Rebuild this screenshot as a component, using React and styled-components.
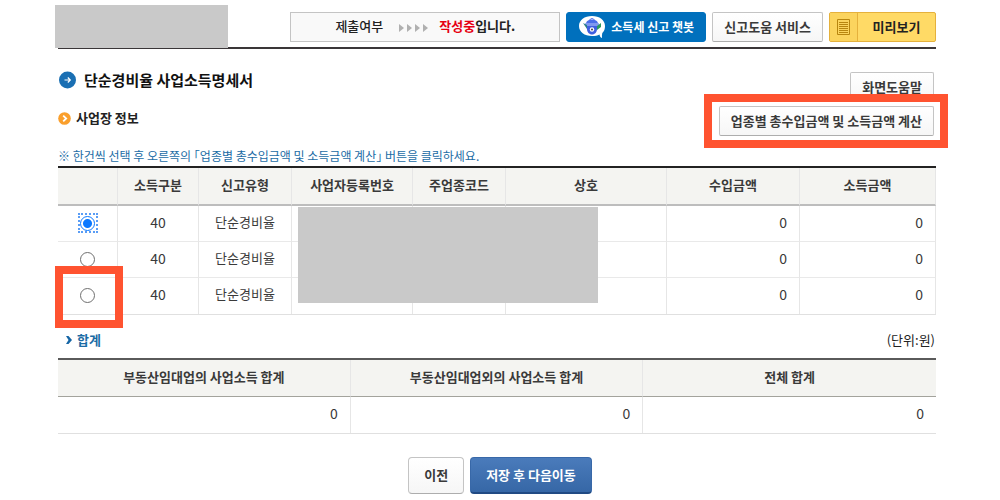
import React from "react";
import styled, { createGlobalStyle } from "styled-components";

const GlobalStyle = createGlobalStyle`
  * {
    box-sizing: border-box;
  }

  body {
    margin: 0;
    background: #fff;
    color: #3a3a3a;
    font-family: "Noto Sans CJK KR", "Noto Sans", sans-serif;
    font-size: 13px;
    line-height: 20px;
  }

  button {
    font-family: inherit;
    cursor: pointer;
  }
`;

const Page = styled.div`
  padding-bottom: 6px;
`;

const Content = styled.main`
  padding: 0 64px 0 58px;
`;

const TopBar = styled.header`
  position: relative;
  display: flex;
  justify-content: flex-end;
  gap: 6px;
  height: 49px;
  padding-top: 12px;
  border-bottom: 2px solid #3a3638;
`;

const Mask = styled.div`
  position: absolute;
  background: #c9c9c9;
`;

const TitleMask = styled(Mask)`
  top: 5px;
  left: -3px;
  width: 173px;
  height: 43px;
`;

const TableMask = styled(Mask)`
  top: 41px;
  left: 240px;
  width: 300px;
  height: 96px;
`;

const Status = styled.div`
  display: flex;
  align-items: center;
  justify-content: center;
  width: 270px;
  height: 30px;
  padding-bottom: 2px;
  border: 1px solid #c4c4c4;
  background: #f9f9f9;
  color: #222;
  font-weight: 500;

  svg {
    margin: 4px 10px 0 16px;
  }

  b {
    font-weight: 700;
  }

  em {
    color: #e60012;
    font-style: normal;
  }
`;

const Button = styled.button`
  height: ${({ $large }) => ($large ? 37 : 30)}px;
  padding: 0 ${({ $large }) => ($large ? 15 : 11)}px 1px;
  border: 1px solid #c4c4c4;
  border-bottom-color: #adadad;
  border-radius: ${({ $large }) => ($large ? 4 : 2)}px;
  background: linear-gradient(#fff, #f6f6f6);
  color: #3a3a3a;
  font-size: 13px;
  font-weight: 700;
  line-height: 20px;
  white-space: nowrap;
`;

const ChatButton = styled(Button)`
  display: flex;
  align-items: center;
  gap: 5px;
  width: 140px;
  border-color: #0070bd;
  border-radius: 3px;
  background: #0070bd;
  color: #fff;
  font-size: 12px;
`;

const PreviewButton = styled(Button)`
  display: flex;
  align-items: center;
  width: 107px;
  padding: 0;
  border-color: #e5b13c;
  background: #ffda66;
  color: #222;

  span {
    flex: 1;
  }
`;

const PreviewIcon = styled.i`
  display: flex;
  align-items: center;
  justify-content: center;
  width: 28px;
  height: 28px;
  border-right: 1px solid #e5b13c;
  background: #fbd45e;
`;

const SaveButton = styled(Button)`
  border-color: #3868a8;
  border-bottom: 2px solid #214a83;
  background: linear-gradient(#4a7bbb, #3667a6);
  color: #fff;
`;

const Intro = styled.div`
  display: flex;
  justify-content: space-between;
  height: 97px;
  padding: 21px 2px 0 0;
`;

const Headings = styled.div`
  display: flex;
  flex-direction: column;
  gap: 18px;
`;

const Title = styled.h1`
  display: flex;
  align-items: center;
  gap: 8px;
  margin: 0;
  color: #111;
  font-size: 15px;
  line-height: 20px;
`;

const SubTitle = styled.h2`
  display: flex;
  align-items: center;
  gap: 5px;
  margin: 0;
  color: #222;
  font-size: 13px;
  line-height: 20px;
`;

const Tools = styled.div`
  display: flex;
  flex-direction: column;
  align-items: flex-end;
  gap: 4px;
  padding-top: 2px;
`;

const Marked = styled.div`
  position: relative;
`;

const Highlight = styled.span`
  position: absolute;
  inset: ${({ $inset }) => $inset};
  border: 8px solid #ff5330;
  pointer-events: none;
`;

const Note = styled.p`
  margin: 0;
  color: #1b6ca5;
  font-size: 12px;
  line-height: 20px;
`;

const TableWrap = styled.div`
  position: relative;
`;

const Table = styled.table`
  width: 100%;
  table-layout: fixed;
  border-collapse: separate;
  border-spacing: 0;
  border-top: 2px solid ${({ $line }) => $line};
  border-bottom: 1px solid #e0e0e0;

  th,
  td {
    border-right: 1px solid #e6e6e6;
    text-align: center;
  }

  th {
    height: 38px;
    padding: 0 0 2px;
    border-bottom: ${({ $rule }) => $rule};
    background: #f4f4f1;
    font-weight: 700;
  }

  td {
    position: relative;
    height: 36px;
    padding: 0 12px 4px;
    border-bottom: 1px solid #e9e9e9;
  }

  tbody tr:last-child td {
    border-bottom: 0;
  }
`;

const Num = styled.td`
  font-size: 14px;

  &&& {
    text-align: ${({ $right }) => ($right ? "right" : "center")};
  }
`;

const SumTable = styled(Table)`
  th {
    height: 37px;
  }

  th:last-child,
  td:last-child {
    border-right: 0;
  }
`;

const RadioBox = styled.label`
  display: flex;
  align-items: center;
  justify-content: center;
  width: 20px;
  height: 20px;
  margin: 3px auto 0;
  border: 2px dotted transparent;

  &:has(:checked) {
    border-color: #5a9df5;
  }
`;

const Radio = styled.input`
  appearance: none;
  flex: none;
  width: 15px;
  height: 15px;
  margin: 0;
  border: 1px solid #6f6f6f;
  border-radius: 50%;
  background: #fff;

  &:checked {
    border-color: #0a78ff;
    background: radial-gradient(circle, #0a78ff 4px, #fff 5px);
  }
`;

const SumHead = styled.div`
  display: flex;
  align-items: center;
  justify-content: space-between;
  height: 43px;
  padding: 6px 1px 0 8px;
  color: #222;

  h2 {
    display: flex;
    align-items: center;
    gap: 5px;
    margin: 0;
    color: #1b6ca5;
    font-size: 13px;
    line-height: 20px;
  }
`;

const Actions = styled.footer`
  display: flex;
  justify-content: center;
  gap: 6px;
  padding-top: 23px;
`;

const Arrows = () => (
  <svg width="30" height="8" viewBox="0 0 30 8" fill="#b0b0b0">
    <path d="M0 0l5 4-5 4zM8 0l5 4-5 4zM16 0l5 4-5 4zM24 0l5 4-5 4z" />
  </svg>
);

const BotIcon = () => (
  <svg width="28" height="24" viewBox="0 0 28 24">
    <path
      d="M14 1C6.500 1 1 5 1 11s5.500 10 13 10c3 0 5.500-.5 7.500-1.600.4 1.600.8 3 2.500 3.600-.2-1.600-.1-3.400.3-5C26.300 16.200 27 14 27 11 27 5 21.500 1 14 1z"
      fill="#fff"
    />
    <path d="M12 5c0-2 4-2 4 0" fill="none" stroke="#4a6ee8" />
    <path d="M8 9c0-3 2.500-4.500 6-4.500S20 6 20 9z" fill="#4a6ee8" />
    <rect x="7" y="8" width="14" height="3" rx="1" fill="#8098f0" />
    <path d="M9 11h10v3c0 3-2 5.500-5 5.500S9 17 9 14z" fill="#3f5fe0" />
    <path d="M5 8l4 2v4z" fill="#2b7f86" />
    <path d="M19 11l4-3v4l-4 3z" fill="#2d9a5f" />
    <circle cx="14" cy="14.500" r="2.200" fill="#fff" />
    <circle cx="14" cy="14.500" r="1" fill="#444" />
  </svg>
);

const DocIcon = () => (
  <svg width="13" height="16" viewBox="0 0 13 16" fill="none" stroke="#b8860f">
    <path d="M.5.5h12v15H.5zM2 3.500h9M2 5.500h9M2 7.500h9M2 9.500h9M2 11.500h9M2 13.500h9" />
  </svg>
);

const TitleIcon = () => (
  <svg width="18" height="18" viewBox="0 0 18 18">
    <circle cx="9.500" cy="9" r="8.500" fill="#1a6fb3" />
    <path
      d="M6.500 9h5.500M9.800 6.500L12.300 9l-2.500 2.500"
      fill="none"
      stroke="#fff"
      strokeWidth="1.200"
    />
  </svg>
);

const SubIcon = () => (
  <svg width="13" height="13" viewBox="0 0 13 13">
    <circle cx="6.500" cy="6.500" r="6.300" fill="#fa9f2c" />
    <path
      d="M5.200 3.600L8.200 6.500 5.200 9.400"
      fill="none"
      stroke="#fff"
      strokeWidth="1.800"
    />
  </svg>
);

const Chevron = () => (
  <svg width="6" height="8" viewBox="0 0 6 8">
    <path d="M0 0h2.500L6 4 2.500 8H0l2.500-4z" fill="#1565a5" />
  </svg>
);

const columns = [
  { name: "", width: 60 },
  { name: "소득구분", width: 81 },
  { name: "신고유형", width: 93 },
  { name: "사업자등록번호", width: 121 },
  { name: "주업종코드", width: 93 },
  { name: "상호" },
  { name: "수입금액", width: 133 },
  { name: "소득금액", width: 136 },
];

const rows = [1, 2, 3];

const App = () => {
  return (
    <Page>
      <GlobalStyle />
      <Content>
        <TopBar>
          <TitleMask />
          <Status>
            <span>제출여부</span>
            <Arrows />
            <b>
              <em>작성중</em>입니다.
            </b>
          </Status>
          <ChatButton type="button">
            <BotIcon />
            소득세 신고 챗봇
          </ChatButton>
          <Button type="button">신고도움 서비스</Button>
          <PreviewButton type="button">
            <PreviewIcon>
              <DocIcon />
            </PreviewIcon>
            <span>미리보기</span>
          </PreviewButton>
        </TopBar>

        <Intro>
          <Headings>
            <Title>
              <TitleIcon />
              단순경비율 사업소득명세서
            </Title>
            <SubTitle>
              <SubIcon />
              사업장 정보
            </SubTitle>
          </Headings>
          <Tools>
            <Button type="button">화면도움말</Button>
            <Marked>
              <Button type="button">업종별 총수입금액 및 소득금액 계산</Button>
              <Highlight $inset="-12px -14px -12px -15px" />
            </Marked>
          </Tools>
        </Intro>

        <Note>
          ※ 한건씩 선택 후 오른쪽의 ｢업종별 총수입금액 및 소득금액 계산｣ 버튼을
          클릭하세요.
        </Note>
        <TableWrap>
          <Table $line="#222" $rule="2px solid #bdbdbd">
            <colgroup>
              {columns.map((col) => (
                <col key={col.name} width={col.width} />
              ))}
            </colgroup>
            <thead>
              <tr>
                {columns.map((col) => (
                  <th key={col.name}>{col.name}</th>
                ))}
              </tr>
            </thead>
            <tbody>
              {rows.map((row) => (
                <tr key={row}>
                  <td>
                    <RadioBox>
                      <Radio
                        type="radio"
                        name="business"
                        aria-label={`${row}`}
                        defaultChecked={row === 1}
                      />
                    </RadioBox>
                    {row === 3 && <Highlight $inset="-12px -6px -14px -3px" />}
                  </td>
                  <Num>40</Num>
                  <td>단순경비율</td>
                  <td />
                  <td />
                  <td />
                  <Num $right>0</Num>
                  <Num $right>0</Num>
                </tr>
              ))}
            </tbody>
          </Table>
          <TableMask />
        </TableWrap>

        <SumHead>
          <h2>
            <Chevron />
            합계
          </h2>
          <span>(단위:원)</span>
        </SumHead>
        <SumTable $line="#5a5a5a" $rule="1px solid #a3a39c">
          <thead>
            <tr>
              <th>부동산임대업의 사업소득 합계</th>
              <th>부동산임대업외의 사업소득 합계</th>
              <th>전체 합계</th>
            </tr>
          </thead>
          <tbody>
            <tr>
              <Num $right>0</Num>
              <Num $right>0</Num>
              <Num $right>0</Num>
            </tr>
          </tbody>
        </SumTable>
      </Content>
      <Actions>
        <Button type="button" $large>
          이전
        </Button>
        <SaveButton type="button" $large>
          저장 후 다음이동
        </SaveButton>
      </Actions>
    </Page>
  );
};

export default App;
